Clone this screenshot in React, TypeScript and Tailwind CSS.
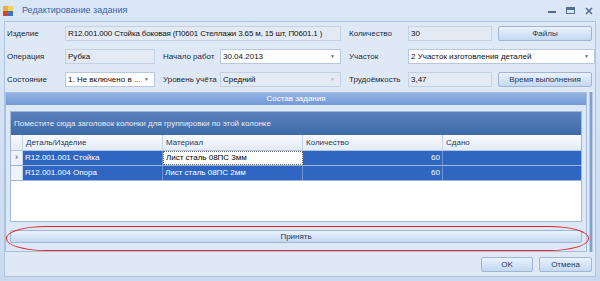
import React from 'react';

const font = { fontFamily: '"Liberation Sans", Arial, sans-serif' };

function Field({ w, value, white, arrow, dim, tight }: { w: string; value: string; white?: boolean; arrow?: boolean; dim?: boolean; tight?: boolean }) {
  return (
    <div
      className={`${w} h-[15px] flex items-center border ${white ? 'bg-white border-[#b7c9e1]' : 'bg-[#e3eaf4] border-[#c3d1e4]'} pl-[2px] shrink-0`}
    >
      <span className={`flex-1 whitespace-nowrap overflow-hidden text-[8px] text-[#111] ${tight ? 'tracking-[-0.15px]' : ''}`}>{value}</span>
      {arrow && <span className={`w-[10px] text-[5px] ${dim ? 'text-[#a9b8cc]' : 'text-[#4f6a95]'}`}>▼</span>}
    </div>
  );
}

function Label({ w, text }: { w: string; text: string }) {
  return <div className={`${w} shrink-0 whitespace-nowrap text-[8px] text-[#1b2a40]`}>{text}</div>;
}

function Btn({ w, text, h = 'h-[15px]' }: { w: string; text: string; h?: string }) {
  return (
    <div
      className={`${w} ${h} shrink-0 flex items-center justify-center rounded-[2px] border border-[#9fb6d6] bg-gradient-to-b from-[#eaf2fc] via-[#d7e5f7] to-[#c5d8f1] text-[8px] text-[#1e395b]`}
    >
      {text}
    </div>
  );
}

export default function App() {
  const rows = [
    { part: 'R12.001.001 Стойка', mat: 'Лист сталь 08ПС 3мм', qty: '60', focus: true },
    { part: 'R12.001.004 Опора', mat: 'Лист сталь 08ПС 2мм', qty: '60', focus: false },
  ];

  return (
    <div className="w-[600px] h-[281px] bg-gradient-to-b from-[#dbe7f6] to-[#c9daf0] flex flex-col overflow-hidden" style={font}>
      {/* Title bar */}
      <div className="h-[21px] flex items-center shrink-0">
        <svg className="ml-[3px]" width="10" height="10" viewBox="0 0 10 10">
          <rect x="0" y="0" width="5" height="5" fill="#e8b33a" />
          <rect x="5" y="0" width="5" height="5" fill="#f3d35f" />
          <rect x="0" y="5" width="5" height="5" fill="#d8442f" />
          <rect x="5" y="5" width="5" height="5" fill="#3b76c8" />
        </svg>
        <span className="ml-[9px] text-[9px] text-[#3c64a3]">Редактирование задания</span>
        <div className="ml-auto flex items-center gap-[10px] mr-[7px]">
          <div className="w-[8px] h-[2px] bg-[#566d92] mt-[2px]" />
          <div className="w-[9px] h-[7px] border border-[#566d92] border-t-[3px]" />
          <svg width="8" height="8" viewBox="0 0 8 8">
            <path d="M1 1 L7 7 M7 1 L1 7" stroke="#566d92" strokeWidth="1.6" />
          </svg>
        </div>
      </div>

      {/* Client area */}
      <div className="flex-1 min-h-0 mx-[4px] mb-[4px] bg-[#dfe9f5] border border-[#aec3e0] flex flex-col">
        {/* Form */}
        <div className="flex flex-col gap-[8px] pt-[4px] pl-[2px] pr-[3px]">
          <div className="flex items-center">
            <Label w="w-[58px]" text="Изделие" />
            <Field w="w-[276px]" tight value="R12.001.000 Стойка боковая (П0601 Стеллажи 3.65 м, 15 шт, П0601.1 )" />
            <Label w="w-[67px] pl-[8px]" text="Количество" />
            <Field w="w-[84px]" value="30" />
            <div className="w-[9px]" />
            <Btn w="w-[94px]" text="Файлы" />
          </div>
          <div className="flex items-center">
            <Label w="w-[58px]" text="Операция" />
            <Field w="w-[90px]" value="Рубка" />
            <Label w="w-[65px] pl-[8px]" text="Начало работ" />
            <Field w="w-[121px]" white arrow value="30.04.2013" />
            <Label w="w-[67px] pl-[8px]" text="Участок" />
            <Field w="w-[187px]" white arrow value="2 Участок изготовления деталей" />
          </div>
          <div className="flex items-center">
            <Label w="w-[58px]" text="Состояние" />
            <Field w="w-[90px]" white arrow value="1. Не включено в ..." />
            <Label w="w-[65px] pl-[8px]" text="Уровень учёта" />
            <Field w="w-[121px]" arrow dim value="Средний" />
            <Label w="w-[67px] pl-[8px]" text="Трудоёмкость" />
            <Field w="w-[84px]" value="3,47" />
            <div className="w-[9px]" />
            <Btn w="w-[94px]" text="Время выполнения" />
          </div>
        </div>

        {/* Group panel */}
        <div className="flex mt-[5px]">
          <div className="flex-1 flex flex-col border border-[#a7bfe0] bg-[#dde8f6]">
            <div className="h-[12px] flex items-center justify-center bg-gradient-to-b from-[#93b3e4] to-[#7399d6] text-[8px] text-white">
              Состав задания
            </div>
            <div className="px-[4px] pt-[6px] pb-[8px] flex flex-col">
              {/* Grid */}
              <div className="h-[111px] border border-[#9fb7d8] bg-white flex flex-col">
                <div className="h-[23px] shrink-0 flex items-center pl-[3px] bg-gradient-to-b from-[#5981bc] to-[#3f6aa8] text-[8px] text-[#e6edf7]">
                  Поместите сюда заголовок колонки для группировки по этой колонке
                </div>
                <div className="h-[16px] shrink-0 flex bg-gradient-to-b from-[#f9fbfe] to-[#e3ecf8] border-b border-[#b4c7e2] text-[8px] text-[#1e395b]">
                  <div className="w-[12px] border-r border-[#c5d5ea]" />
                  <div className="w-[140px] border-r border-[#c5d5ea] pl-[3px] flex items-center">Деталь/Изделие</div>
                  <div className="w-[140px] border-r border-[#c5d5ea] pl-[3px] flex items-center">Материал</div>
                  <div className="w-[140px] border-r border-[#c5d5ea] pl-[3px] flex items-center">Количество</div>
                  <div className="flex-1 pl-[3px] flex items-center">Сдано</div>
                </div>
                {rows.map((r) => (
                  <div key={r.part} className="h-[15px] shrink-0 flex border-b border-[#9bb4dc] text-[8px]">
                    <div className="w-[12px] bg-[#eef3fa] border-r border-[#c5d5ea] flex items-center justify-center text-[9px] text-[#1e395b]">
                      {r.focus ? '›' : ''}
                    </div>
                    <div className="w-[140px] bg-[#2f66c1] text-white border-r border-[#6d93d1] pl-[2px] flex items-center">{r.part}</div>
                    <div
                      className={`w-[140px] pl-[2px] flex items-center ${r.focus ? 'bg-white text-black border border-dotted border-[#666]' : 'bg-[#2f66c1] text-white border-r border-[#6d93d1]'}`}
                    >
                      {r.mat}
                    </div>
                    <div className="w-[140px] bg-[#2f66c1] text-white border-r border-[#6d93d1] pr-[2px] flex items-center justify-end">{r.qty}</div>
                    <div className="flex-1 bg-[#2f66c1]" />
                  </div>
                ))}
                <div className="flex-1" />
              </div>
              {/* Accept button with red annotation */}
              <div className="relative mt-[8px]">
                <Btn w="w-full" h="h-[13px]" text="Принять" />
                <div className="absolute -left-[4px] -right-[7px] -top-[4px] -bottom-[8px] rounded-[40px/12px] border-[1.5px] border-[#e8262d]" />
              </div>
            </div>
          </div>
          <div className="w-[8px] flex justify-center">
            <div className="w-[4px] bg-[#7fa0d3] border-x border-[#b9cdea]" />
          </div>
        </div>

        {/* Footer */}
        <div className="flex justify-end gap-[6px] mt-[5px] pr-[3px]">
          <Btn w="w-[52px]" h="h-[15px]" text="OK" />
          <Btn w="w-[53px]" h="h-[15px]" text="Отмена" />
        </div>
      </div>
    </div>
  );
}
